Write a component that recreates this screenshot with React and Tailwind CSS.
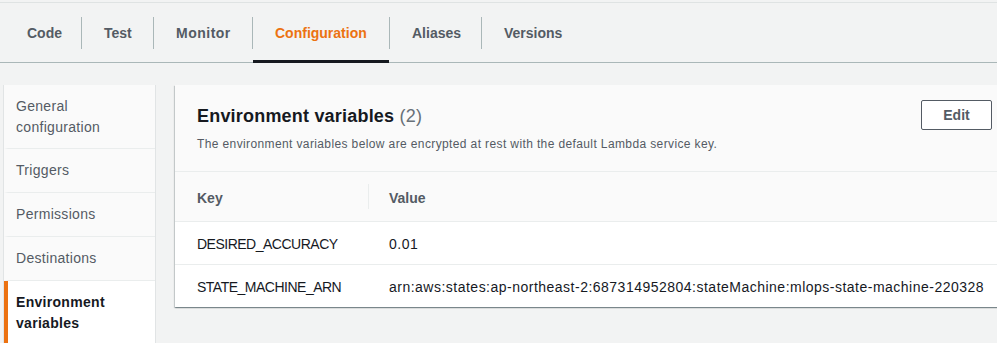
import React from "react";

const tabs = [
  { t: "Code", w: "w-[75px]" },
  { t: "Test", w: "w-[71px]" },
  { t: "Monitor", w: "w-[98px]" },
  { t: "Configuration", w: "w-[136px]" },
  { t: "Aliases", w: "w-[91px]" },
  { t: "Versions", w: "w-[100px]" },
];
const side = [
  { label: ["General", "configuration"] },
  { label: ["Triggers"] },
  { label: ["Permissions"] },
  { label: ["Destinations"] },
  { label: ["Environment", "variables"], active: true },
];
const rows = [
  ["DESIRED_ACCURACY", "0.01"],
  ["STATE_MACHINE_ARN", "arn:aws:states:ap-northeast-2:687314952804:stateMachine:mlops-state-machine-220328"],
];

export default function App() {
  return (
    <div className="w-[997px] h-[343px] overflow-hidden bg-[#f2f3f3] font-['Liberation_Sans',Arial,sans-serif] pt-[2px]">
      <div className="flex h-[61px] border-t border-b border-t-[#dfe3e3] border-b-[#aab7b8] pl-[6px]">
        {tabs.map(({ t, w }, i) => (
          <React.Fragment key={t}>
            {i > 0 && <div className="w-px h-[32px] shrink-0 self-center bg-[#aab7b8]" />}
            <div
              className={
                "relative shrink-0 flex items-center pt-[1px] text-[14px] font-bold " +
                w +
                " " +
                (i === 0 ? "pl-[21px]" : "pl-[22px]") +
                " " +
                (t === "Configuration" ? "text-[#ec7211]" : "text-[#545b64]") +
                (t === "Monitor" ? " tracking-[0.5px]" : "")
              }
            >
              {t}
              {t === "Configuration" && (
                <span className="absolute left-0 right-0 bottom-[-1px] h-[3px] bg-[#16191f]" />
              )}
            </div>
          </React.Fragment>
        ))}
      </div>

      <div className="flex items-start mt-[22px]">
        <div className="ml-[3px] w-[153px] shrink-0 h-[258px] bg-[#fafafa] border-x border-[#e1e4e5] flex flex-col">
          {side.map((s, i) => (
            <div
              key={i}
              className={
                "border-l-4 pl-[8px] pr-2 pt-[11px] border-b border-b-[#eaeded] text-[14px] leading-[21px] tracking-[0.3px] " +
                (i === 0 ? "pb-[10px] " : "pb-[11px] ") +
                (s.active
                  ? "border-l-[#ec7211] bg-white text-[#16191f] font-bold flex-1"
                  : "border-l-transparent text-[#545b64]")
              }
            >
              {s.label.map((l) => (
                <div key={l}>{l}</div>
              ))}
            </div>
          ))}
        </div>

        <div className="ml-[19px] w-[837px] shrink-0 bg-white shadow-[0_1px_1px_0_rgba(0,28,36,0.3),1px_1px_1px_0_rgba(0,28,36,0.15),-1px_1px_1px_0_rgba(0,28,36,0.15)]">
          <div className="h-[87px] bg-[#fafafa] border-b border-[#eaeded] flex justify-between pl-[22px] pr-[20px]">
            <div className="pt-[20px]">
              <div className="text-[18px] leading-[22px] font-bold text-[#16191f] tracking-[0.2px]">
                Environment variables <span className="font-normal text-[#687078]">(2)</span>
              </div>
              <div className="mt-[9px] text-[12px] leading-[16px] text-[#545b64] tracking-[0.38px]">
                The environment variables below are encrypted at rest with the default Lambda service key.
              </div>
            </div>
            <div className="pt-[15px]">
              <div className="w-[71px] h-[30px] flex items-center justify-center border border-[#545b64] rounded-[2px] bg-white text-[14px] font-bold text-[#545b64]">
                Edit
              </div>
            </div>
          </div>

          <div className="h-[50px] bg-[#fafafa] border-b border-[#eaeded] flex items-center text-[14px] font-bold text-[#545b64]">
            <div className="w-[193px] pl-[22px] pt-[3px]">Key</div>
            <div className="w-px h-[25px] bg-[#eaeded]" />
            <div className="pl-[20px] pt-[3px]">Value</div>
          </div>

          {rows.map((r, i) => (
            <div
              key={r[0]}
              className={
                "flex items-center pt-[3px] text-[14px] text-[#16191f] " +
                (i === 0 ? "h-[43px] border-b border-[#eaeded]" : "h-[42px]")
              }
            >
              <div className="w-[194px] pl-[22px] tracking-[-0.5px]">{r[0]}</div>
              <div className="pl-[20px] whitespace-nowrap tracking-[0.49px]">{r[1]}</div>
            </div>
          ))}
        </div>
      </div>
    </div>
  );
}
